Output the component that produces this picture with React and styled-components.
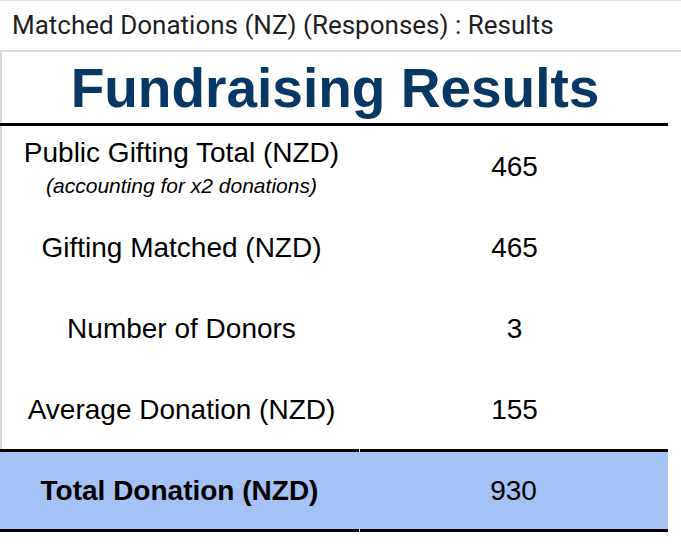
import React from 'react';
import styled, { createGlobalStyle } from 'styled-components';

const GlobalStyle = createGlobalStyle`
  html, body {
    margin: 0;
    padding: 0;
    background: #ffffff;
  }
`;

const Page = styled.div`
  width: 681px;
  height: 547px;
  overflow: hidden;
  background: #ffffff;
`;

const SheetTitle = styled.div`
  height: 52px;
  box-sizing: border-box;
  border-top: 1px solid #e3e3e3;
  border-bottom: 2px solid #dadada;
  padding: 0 0 2px 12px;
  display: flex;
  align-items: center;
  font-family: Roboto, 'Liberation Sans', sans-serif;
  font-size: 26px;
  color: #1f1f1f;
`;

const Table = styled.div`
  width: 668px;
  font-family: 'Liberation Sans', Arial, sans-serif;
  color: #000000;
`;

const Body = styled.div`
  border-left: 2px solid #d9d9d9;
`;

const Heading = styled.div`
  height: 71px;
  display: flex;
  align-items: center;
  justify-content: center;
  padding-top: 1px;
  box-sizing: border-box;
  font-size: 55px;
  font-weight: bold;
  color: #073763;
`;

const Rule = styled.div`
  display: grid;
  grid-template-columns: ${(p) => (p.split ? '359px 1fr' : '1fr')};
  column-gap: 1px;
  & > span {
    display: block;
    height: 3px;
    background: #000000;
  }
`;

const Row = styled.div`
  display: grid;
  grid-template-columns: 359px 1fr;
  height: ${(p) => p.h}px;
  background: ${(p) => (p.total ? '#a4c2f4' : 'transparent')};
  font-weight: ${(p) => (p.total ? 'bold' : 'normal')};
`;

const Cell = styled.div`
  display: flex;
  flex-direction: column;
  align-items: center;
  justify-content: center;
  text-align: center;
  font-size: 28px;
  line-height: 33px;
`;

const Value = styled(Cell)`
  font-weight: normal;
`;

const Note = styled.div`
  font-size: 21px;
  font-style: italic;
  line-height: 24px;
  margin-top: 5px;
  font-weight: normal;
`;

const rows = [
  { label: 'Public Gifting Total (NZD)', note: '(accounting for x2 donations)', value: 465, h: 81 },
  { label: 'Gifting Matched (NZD)', value: 465, h: 81 },
  { label: 'Number of Donors', value: 3, h: 81 },
  { label: 'Average Donation (NZD)', value: 155, h: 80 },
];

export default function App() {
  return (
    <Page>
      <GlobalStyle />
      <SheetTitle>Matched Donations (NZ) (Responses) : Results</SheetTitle>
      <Table>
        <Body>
          <Heading>Fundraising Results</Heading>
        </Body>
        <Rule>
          <span />
        </Rule>
        <Body>
          {rows.map((r) => (
            <Row key={r.label} h={r.h}>
              <Cell>
                <div>{r.label}</div>
                {r.note && <Note>{r.note}</Note>}
              </Cell>
              <Value>{r.value}</Value>
            </Row>
          ))}
        </Body>
        <Rule split>
          <span />
          <span />
        </Rule>
        <Row total h={77}>
          <Cell>Total Donation (NZD)</Cell>
          <Value>930</Value>
        </Row>
        <Rule split>
          <span />
          <span />
        </Rule>
      </Table>
    </Page>
  );
}
